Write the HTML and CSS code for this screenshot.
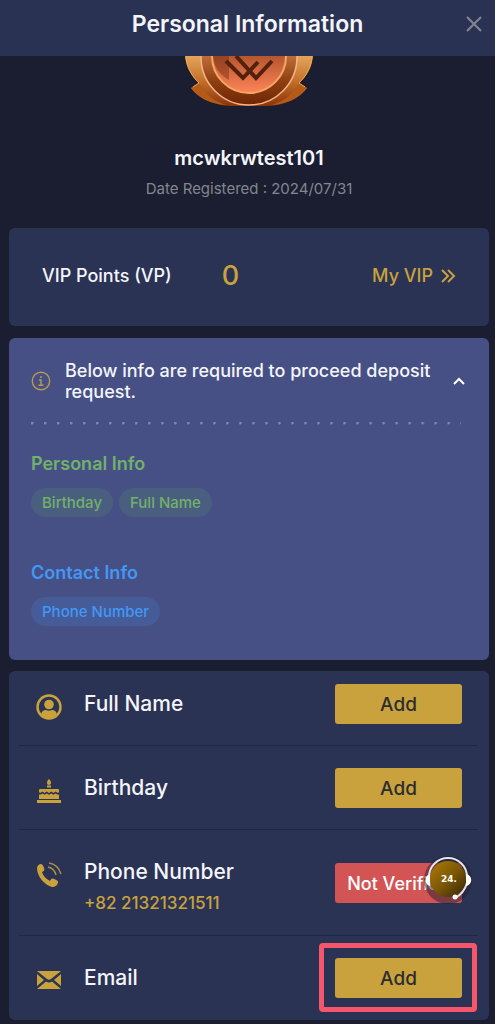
FILE: index.html
```html
<!DOCTYPE html>
<html lang="en">
<head>
  <meta charset="UTF-8">
  <title>Personal Information</title>
  <meta name="viewport" content="width=device-width, initial-scale=1.0">
  <link rel="stylesheet" href="styles.css">
</head>
<body>

  <header class="header">
    <h1>Personal Information</h1>
    <button class="close" aria-label="Close">
      <svg width="16" height="16" viewBox="0 0 16 16"><path d="M1 1l14 14M15 1L1 15" stroke="#85868d" stroke-width="2" fill="none"/></svg>
    </button>
  </header>

  <main>
    <section class="profile">
      <svg class="medal" width="128" height="52" viewBox="0 0 128 52">
        <defs>
          <linearGradient id="wing" x1="0" y1="0" x2="0" y2="1">
            <stop offset="0" stop-color="#e3a55a"/>
            <stop offset="0.5" stop-color="#c4702a"/>
            <stop offset="1" stop-color="#8a3409"/>
          </linearGradient>
          <linearGradient id="ring" x1="0" y1="0" x2="0" y2="1">
            <stop offset="0.5" stop-color="#bd6c38"/>
            <stop offset="0.75" stop-color="#8f3f10"/>
            <stop offset="1" stop-color="#6e2604"/>
          </linearGradient>
          <linearGradient id="core" x1="0" y1="0" x2="0" y2="1">
            <stop offset="0.5" stop-color="#b5562f"/>
            <stop offset="1" stop-color="#ff8458"/>
          </linearGradient>
        </defs>
        <path d="M0 0h128c-1 11-6 20-14 27l8 5c-9 11-23 18-42 18H46C28 49 14 43 6 32l8-5C6 20 1 11 0 0z" fill="url(#wing)"/>
        <path d="M6 32l8-5c5 10 14 18 27 22C26 48 13 42 6 32zM122 32l-8-5c-5 10-14 18-27 22 15-1 28-7 35-17z" fill="#b65a18"/>
        <path d="M8 31l6-4M120 31l-6-4M1 1c1 10 5 18 13 26M127 1c-1 10-5 18-13 26" stroke="#f0a850" fill="none"/>
        <circle cx="64" cy="1" r="48" fill="url(#ring)" stroke="#f5b48c" stroke-width="1.5"/>
        <circle cx="64" cy="0" r="37" fill="url(#core)" stroke="#f3a866" stroke-width="2"/>
        <path d="M28 0h16v24C34 18 29 10 28 0z" fill="#7d3012" opacity="0.5"/>
        <path d="M41 5l17 17L73 6M51 0l20 22L87 5" stroke="#54210f" stroke-width="4" fill="none"/>
      </svg>
      <h2 class="username">mcwkrwtest101</h2>
      <p class="registered">Date Registered : 2024/07/31</p>
    </section>

    <section class="card vip">
      <span class="vip-label">VIP Points (VP)</span>
      <span class="vip-points">0</span>
      <a class="vip-link" href="#">My VIP
        <svg width="15" height="14" viewBox="0 0 15 14"><path d="M1 1l6 6-6 6M7 1l6 6-6 6" stroke="currentColor" stroke-width="2" fill="none"/></svg>
      </a>
    </section>

    <section class="card notice">
      <div class="notice-head">
        <svg width="20" height="20" viewBox="0 0 20 20" fill="none" stroke="#b79a53"><circle cx="10" cy="10" r="8.7" stroke-width="1.4"/><path d="M10 5v2M8 9h2v5M7.5 14.300h5" stroke-width="1.4"/></svg>
        <p class="notice-text">Below info are required to proceed deposit request.</p>
        <button class="toggle" aria-label="Collapse">
          <svg width="12" height="8" viewBox="0 0 12 8"><path d="M1 7l5-5 5 5" stroke="#fff" stroke-width="2" fill="none"/></svg>
        </button>
      </div>
      <div class="dots"></div>
      <div class="group personal">
        <h3>Personal Info</h3>
        <div class="tags"><span class="tag">Birthday</span><span class="tag">Full Name</span></div>
      </div>
      <div class="group contact">
        <h3>Contact Info</h3>
        <div class="tags"><span class="tag">Phone Number</span></div>
      </div>
    </section>

    <section class="card list">
      <div class="row">
        <svg class="icon" width="26" height="26" viewBox="0 0 26 26">
          <circle cx="13" cy="13" r="11.500" fill="none" stroke="currentColor" stroke-width="2.500"/>
          <circle cx="13" cy="10.500" r="4.800" fill="currentColor"/>
          <path d="M5 22c0-4 2-6 5-6 2 1 4 1 6 0 3 0 5 2 5 6-5 4-11 4-16 0z" fill="currentColor"/>
        </svg>
        <div class="info"><h3>Full Name</h3></div>
        <button class="btn">Add</button>
      </div>

      <div class="row">
        <svg class="icon" width="26" height="26" viewBox="0 0 26 26" fill="currentColor">
          <path d="M13 1c2 2 2 3 2 4a2 2 0 0 1-4 0c0-1 0-2 2-4zM11 7.500h4v2h-4z"/>
          <path d="M4 11h18q1 0 1 1v2l-1 1-2.500-1.500-2 1.500-2.200-1.500L13 15l-2.300-1.500L8.500 15l-2-1.500L4 15l-1-1v-2q0-1 1-1z"/>
          <path d="M3 16.500l1 .3 2.500-1.300 2 1.300 2.200-1.300 2.300 1.300 2.300-1.300 2.200 1.300 2-1.300 2.500 1.300 1-.3V21H3zM1 22h24v3H1z"/>
        </svg>
        <div class="info"><h3>Birthday</h3></div>
        <button class="btn">Add</button>
      </div>

      <div class="row">
        <svg class="icon" width="26" height="26" viewBox="0 0 26 26">
          <path d="M1 6c0-2 2-4 4-4 1 0 2 1 3 4 1 2 0 3-2 4 1 4 4 7 8 9 1-2 2-3 4-2 3 1 4 2 4 3 0 3-3 5-6 5C9 23 1 15 1 6z" fill="currentColor"/>
          <path d="M12 5c5 1 7 4 8 8M13 1c7 1 10 5 12 11" fill="none" stroke="currentColor" stroke-width="1.500" opacity="0.8"/>
        </svg>
        <div class="info">
          <h3>Phone Number</h3>
          <p class="phone">+82 21321321511</p>
        </div>
        <div class="action">
          <button class="btn btn-danger">Not Verified</button>
          <svg class="support" width="50" height="50" viewBox="0 0 50 50">
            <defs>
              <linearGradient id="ball" x1="0" y1="0" x2="1" y2="1">
                <stop offset="0" stop-color="#b17b00"/>
                <stop offset="0.5" stop-color="#7d5806"/>
                <stop offset="1" stop-color="#332408"/>
              </linearGradient>
            </defs>
            <circle cx="25" cy="26" r="24" fill="#20202b" opacity="0.5"/>
            <circle cx="25" cy="25" r="18" fill="url(#ball)"/>
            <path d="M6 23a19 19 0 0 1 38 0M44 29c-2 7-6 12-12 15" fill="none" stroke="#e6e4e8" stroke-width="2"/>
            <path d="M7 20v12c-6-1-6-11 0-12zM43 20v12c7-1 7-11 0-12z" fill="#fff"/>
            <circle cx="32" cy="43" r="2.500" fill="#fff"/>
            <text class="support-text" x="26" y="28" text-anchor="middle">24.</text>
          </svg>
        </div>
      </div>

      <div class="row">
        <svg class="icon" width="26" height="26" viewBox="0 0 26 26" fill="currentColor">
          <path d="M1 3h24L15 11q-2 1.500-4 0zM1 6l7 6-7 6zM25 6l-7 6 7 6zM1 21l9-7.500q3 2 6 0L25 21z"/>
        </svg>
        <div class="info"><h3>Email</h3></div>
        <div class="action marked"><button class="btn">Add</button></div>
      </div>
    </section>
  </main>

</body>
</html>
```
FILE: styles.css
```css
* {
  box-sizing: border-box;
}

body {
  margin: 0;
  font-family: Inter, "Open Sans", sans-serif;
  font-weight: 500;
  background: #1a1e30;
  color: #f4f5fa;
}

h1, h2, h3, p {
  margin: 0;
  font-weight: 500;
}

svg {
  display: block;
  flex: none;
}

button {
  font-family: inherit;
  font-weight: 500;
  border: none;
  padding: 0;
  background: none;
  cursor: pointer;
}

.header {
  position: relative;
  background: #2a3254;
  padding: 8px 0 16px;
  text-align: center;
}

.header h1 {
  font-size: 23px;
  line-height: 32px;
  font-weight: 600;
}

.close {
  position: absolute;
  top: 16px;
  right: 13px;
}

main {
  padding: 0 6px 3px 9px;
}

.profile {
  display: flex;
  flex-direction: column;
  align-items: center;
  padding-bottom: 28px;
}

.username {
  margin-top: 36px;
  font-size: 20px;
  line-height: 28px;
  font-weight: 600;
}

.registered {
  margin-top: 6px;
  font-size: 15px;
  line-height: 22px;
  font-weight: 400;
  color: #84868f;
}

.card {
  border-radius: 6px;
  background: #2a3354;
}

.vip {
  display: flex;
  align-items: center;
  padding: 31px 33px 33px;
  line-height: 34px;
}

.vip-label {
  font-size: 18px;
}

.vip-points {
  margin-left: 50px;
  font-size: 27px;
  color: #c9a23e;
}

.vip-link {
  display: flex;
  align-items: center;
  gap: 8px;
  margin-left: auto;
  font-size: 18px;
  color: #c9a23e;
  text-decoration: none;
}

.notice {
  margin-top: 12px;
  padding: 22px 28px 34px 22px;
  background: #465085;
}

.notice-head {
  display: flex;
  align-items: center;
}

.notice-text {
  flex: 1;
  margin-left: 14px;
  font-size: 18px;
  line-height: 21px;
}

.toggle {
  margin-right: -4px;
  padding-left: 16px;
}

.dots {
  height: 3px;
  margin: 20px 0 27px;
  background: radial-gradient(circle at 1px 1px, #7f87b2 1px, transparent 2px) 0 0 / 13px 3px round;
}

.group h3 {
  font-size: 18px;
  line-height: 24px;
  font-weight: 600;
}

.contact {
  margin-top: 44px;
}

.tags {
  display: flex;
  gap: 6px;
  margin-top: 12px;
}

.tag {
  padding: 0 11px;
  border-radius: 15px;
  font-size: 15px;
  line-height: 29px;
}

.personal {
  color: #72b169;
}

.personal .tag {
  background: #4a5f80;
}

.contact {
  color: #4397f5;
}

.contact .tag {
  background: #455c98;
}

.list {
  margin-top: 11px;
  padding: 0 11px 1px 10px;
}

.row {
  display: flex;
  align-items: center;
  padding: 22px 16px 21px 17px;
  border-bottom: 1px solid #202743;
}

.row:first-child {
  padding-top: 13px;
}

.row:last-child {
  border-bottom: none;
}

.icon {
  align-self: flex-start;
  margin-top: 10px;
  color: #c9a23e;
}

.info {
  flex: 1;
  margin-left: 22px;
}

.info h3 {
  font-size: 21px;
  line-height: 40px;
}

.phone {
  font-size: 17px;
  line-height: 22px;
  color: #c9a23e;
}

.btn {
  display: block;
  width: 127px;
  height: 40px;
  border-radius: 3px;
  background: #c9a23e;
  color: #2c2c30;
  font-size: 19px;
  white-space: nowrap;
}

.btn-danger {
  background: #d25455;
  color: #fff;
  font-size: 18px;
}

.action {
  position: relative;
}

/* floating 24h support badge */
.support {
  position: absolute;
  top: -9px;
  right: -11px;
}

.support-text {
  font-family: "DejaVu Sans", sans-serif;
  font-size: 9px;
  font-weight: 700;
  fill: #fff;
}

.marked::after {
  content: "";
  position: absolute;
  inset: -15px -15px -14px -16px;
  border: 5px solid #f5566b;
  border-radius: 4px;
  pointer-events: none;
}
```
